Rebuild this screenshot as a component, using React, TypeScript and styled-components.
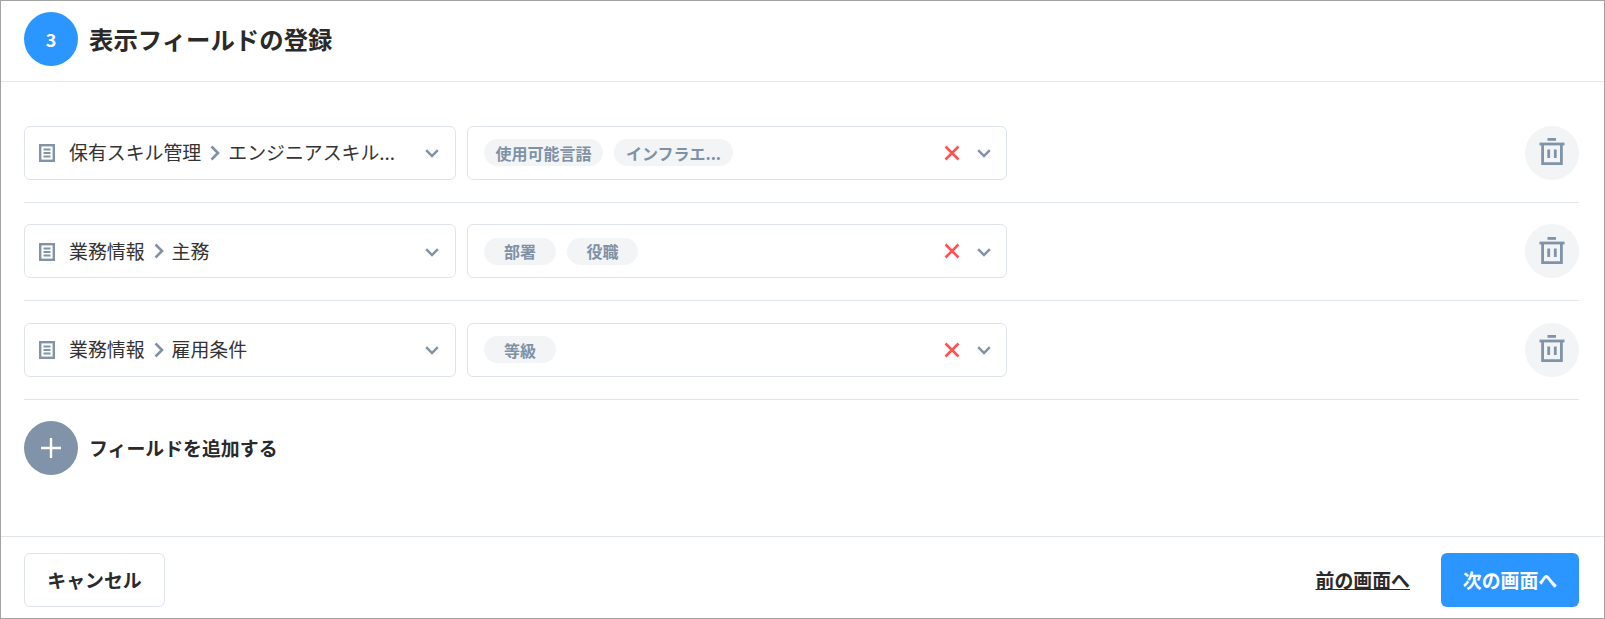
import React from "react";
import styled, { createGlobalStyle } from "styled-components";

const Global = createGlobalStyle`
  html, body { margin: 0; padding: 0; background: #fff; }
  body { font-family: "Noto Sans CJK JP", "Noto Sans", sans-serif; color: #222; }
  * { box-sizing: border-box; }
`;

const Frame = styled.div`
  width: 1605px;
  height: 619px;
  border: 1px solid #a3a3a3;
  display: flex;
  flex-direction: column;
  background: #fff;
`;
const Header = styled.header`
  height: 81px;
  flex: none;
  display: flex;
  align-items: flex-start;
  gap: 11px;
  padding: 11px 23px 0;
  border-bottom: 1px solid #e2e7ec;
`;
const StepBadge = styled.div`
  width: 54px;
  height: 54px;
  border-radius: 50%;
  background: #2b96ff;
  color: #fff;
  font-size: 18px;
  font-weight: 700;
  display: flex;
  align-items: center;
  justify-content: center;
`;
const Title = styled.h1`
  margin: 0;
  font-size: 24.4px;
  font-weight: 700;
  line-height: 54px;
  color: #2a2a2a;
`;
const Body = styled.main`
  flex: 1;
  display: flex;
  flex-direction: column;
  padding: 22px 25px 0 23px;
`;
const Row = styled.div`
  display: flex;
  align-items: center;
  gap: 11px;
  padding: 22px 0 22px;
  height: 98.5px;
  border-bottom: 1px solid #e2e7ec;
`;
const Field = styled.div<{ $width: number }>`
  width: ${(p) => p.$width}px;
  height: 54px;
  flex: none;
  display: flex;
  align-items: center;
  background: #fff;
  border: 1px solid #dfe4ea;
  border-radius: 6px;
`;
const SourceField = styled(Field)`
  padding: 0 16px 0 14px;
  font-size: 18.9px;
  line-height: 52px;
  color: #333;
`;
const DocIcon = styled.svg`
  margin-top: 1px;
  flex: none;
`;
const SourceLabel = styled.span`
  flex: 1;
  display: flex;
  align-items: center;
  margin-left: 14px;
  margin-top: -1px;
  white-space: nowrap;
`;
const Crumb = styled.svg`
  margin: 1px 8px 0 9px;
  flex: none;
`;
const ChipField = styled(Field)`
  padding: 0 15px 0 16px;
`;
const Chips = styled.div`
  flex: 1;
  display: flex;
  gap: 11px;
`;
const Chip = styled.span<{ $width: number }>`
  width: ${(p) => p.$width}px;
  height: 27px;
  border-radius: 14px;
  background: #f2f4f6;
  color: #7f91a5;
  font-size: 16px;
  font-weight: 700;
  display: flex;
  align-items: center;
  justify-content: center;
  white-space: nowrap;
`;
const ClearIcon = styled.svg`
  margin-right: 17px;
  flex: none;
`;
const ChevronIcon = styled.svg`
  margin-top: 2px;
  flex: none;
`;
const TrashButton = styled.button`
  margin-left: auto;
  width: 54px;
  height: 54px;
  padding: 0 0 2px;
  border: none;
  border-radius: 50%;
  background: #f2f4f6;
  display: flex;
  align-items: center;
  justify-content: center;
`;
const AddRow = styled.div`
  display: flex;
  align-items: center;
  gap: 11px;
  margin-top: 21px;
`;
const AddCircle = styled.div`
  width: 54px;
  height: 54px;
  border-radius: 50%;
  background: #8093a8;
  display: flex;
  align-items: center;
  justify-content: center;
`;
const AddLabel = styled.span`
  font-size: 18.9px;
  font-weight: 700;
  color: #2a2a2a;
`;
const Footer = styled.footer`
  height: 82px;
  flex: none;
  display: flex;
  align-items: flex-start;
  padding: 16px 25px 0 23px;
  border-top: 1px solid #e2e7ec;
`;
const CancelButton = styled.button`
  width: 141px;
  height: 54px;
  padding: 0 0 2px;
  background: #fff;
  border: 1px solid #dfe4ea;
  border-radius: 6px;
  font: 700 18.9px "Noto Sans CJK JP", sans-serif;
  color: #2a2a2a;
`;
const BackLink = styled.a`
  margin-left: auto;
  margin-right: 31px;
  font-size: 18.9px;
  line-height: 54px;
  font-weight: 700;
  color: #2a2a2a;
  text-decoration: underline;
`;
const NextButton = styled.button`
  width: 138px;
  height: 54px;
  padding: 0 0 2px;
  border: none;
  border-radius: 6px;
  background: #2b96ff;
  color: #fff;
  font: 700 18.9px "Noto Sans CJK JP", sans-serif;
`;

const Doc = () => (
  <DocIcon width="16" height="18" viewBox="0 0 16 18" fill="none">
    <rect x="1.2" y="1.2" width="13.6" height="15.6" stroke="#8093a8" strokeWidth="2.4" />
    <path d="M4.5 5.5h7M4.5 9h7M4.5 12.5h7" stroke="#8093a8" strokeWidth="1.8" />
  </DocIcon>
);
const Chevron = () => (
  <ChevronIcon width="14" height="9" viewBox="0 0 14 9" fill="none">
    <path d="M1.2 1.2 7 7l5.8-5.8" stroke="#7f91a5" strokeWidth="2.4" />
  </ChevronIcon>
);
const Trash = () => (
  <svg width="26" height="27" viewBox="0 0 26 27" fill="none">
    <path d="M8.5 1.4h8.5" stroke="#8093a8" strokeWidth="2.8" />
    <path d="M0.5 6h25" stroke="#8093a8" strokeWidth="2.8" />
    <path d="M3.6 6v19.6h18.8V6" stroke="#8093a8" strokeWidth="2.8" />
    <path d="M9.7 11.5v8.5M16.3 11.5v8.5" stroke="#8093a8" strokeWidth="2.8" />
  </svg>
);

type RowData = { a: string; b: string; chips: [string, number][] };
const rows: RowData[] = [
  { a: "保有スキル管理", b: "エンジニアスキル...", chips: [["使用可能言語", 119], ["インフラエ...", 119]] },
  { a: "業務情報", b: "主務", chips: [["部署", 72], ["役職", 71]] },
  { a: "業務情報", b: "雇用条件", chips: [["等級", 72]] },
];

export default function App() {
  return (
    <Frame>
      <Global />
      <Header>
        <StepBadge>3</StepBadge>
        <Title>表示フィールドの登録</Title>
      </Header>
      <Body>
        {rows.map((r) => (
          <Row key={r.a + r.b}>
            <SourceField $width={432}>
              <Doc />
              <SourceLabel>
                {r.a}
                <Crumb width="10" height="16" viewBox="0 0 10 16" fill="none">
                  <path d="M1.5 1.5 8 8l-6.5 6.5" stroke="#7f91a5" strokeWidth="2.6" />
                </Crumb>
                {r.b}
              </SourceLabel>
              <Chevron />
            </SourceField>
            <ChipField $width={540}>
              <Chips>
                {r.chips.map(([t, w]) => (
                  <Chip key={t} $width={w}>{t}</Chip>
                ))}
              </Chips>
              <ClearIcon width="16" height="16" viewBox="0 0 16 16" fill="none">
                <path d="M1.5 1.5l13 13M14.5 1.5l-13 13" stroke="#ff5252" strokeWidth="2.6" />
              </ClearIcon>
              <Chevron />
            </ChipField>
            <TrashButton aria-label="削除"><Trash /></TrashButton>
          </Row>
        ))}
        <AddRow>
          <AddCircle>
            <svg width="20" height="20" viewBox="0 0 20 20" fill="none">
              <path d="M10 0v20M0 10h20" stroke="#fff" strokeWidth="2.4" />
            </svg>
          </AddCircle>
          <AddLabel>フィールドを追加する</AddLabel>
        </AddRow>
      </Body>
      <Footer>
        <CancelButton>キャンセル</CancelButton>
        <BackLink>前の画面へ</BackLink>
        <NextButton>次の画面へ</NextButton>
      </Footer>
    </Frame>
  );
}
